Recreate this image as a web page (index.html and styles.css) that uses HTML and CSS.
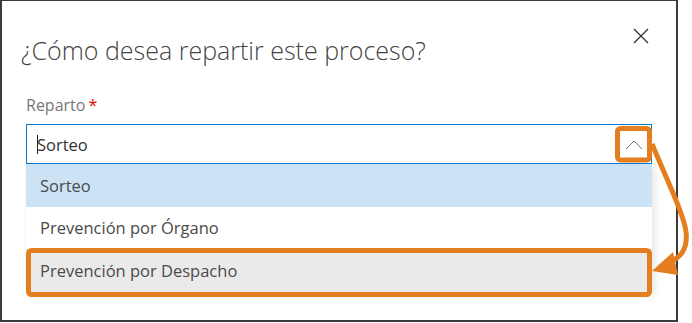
FILE: index.html
```html
<!DOCTYPE html>
<html lang="es">
<head>
<meta charset="utf-8">
<title>Reparto</title>
<link rel="stylesheet" href="styles.css">
</head>
<body>
<div class="dialog">
  <div class="header">
    <h1 class="title">¿Cómo desea repartir este proceso?</h1>
    <button class="close" aria-label="Cerrar">
      <svg width="16" height="16" viewBox="0 0 16 16"><path d="M1 1 L15 15 M15 1 L1 15" stroke="#333" stroke-width="1.3" fill="none"/></svg>
    </button>
  </div>
  <div class="field">
    <label class="label">Reparto<span class="req">*</span></label>
    <div class="combo">
      <span class="caret"></span><span class="value">Sorteo</span>
      <span class="chev"><svg width="18" height="10" viewBox="0 0 18 10"><path d="M1 9 L9 1 L17 9" stroke="#777" stroke-width="1" fill="none"/></svg></span>
    </div>
    <ul class="list">
      <li class="opt selected">Sorteo</li>
      <li class="opt">Prevención por Órgano</li>
      <li class="opt hovered">Prevención por Despacho</li>
    </ul>
  </div>
</div>
<svg class="annot" width="692" height="323" viewBox="0 0 692 323">
  <rect x="617.5" y="128.5" width="32" height="31.5" rx="3" fill="none" stroke="#e57e1e" stroke-width="5"/>
  <rect x="28.5" y="250.5" width="621" height="44" rx="3" fill="none" stroke="#e57e1e" stroke-width="5"/>
  <path d="M652 144 C 668 182, 684 215, 686 232 C 688 250, 680 258, 668 263" stroke="#e57e1e" stroke-width="5" fill="none"/>
  <polygon points="652,271 673,252 678,275" fill="#e57e1e"/>
</svg>
</body>
</html>
```
FILE: styles.css
```css
* { box-sizing: border-box; }
html, body { margin: 0; padding: 0; background: #fff; }
body { width: 692px; height: 323px; overflow: hidden; font-family: "Open Sans", "Segoe UI", sans-serif; color: #333; }

.dialog {
  width: 678px;
  height: 322px;
  border: 2px solid #3a3a3a;
  border-top-width: 1px;
  background: #fff;
  padding: 0 24px 0 24px;
}

.header {
  display: flex;
  justify-content: space-between;
  align-items: flex-start;
  height: 90px;
}

.title {
  margin: 32px 0 0 -5px;
  font-size: 25px;
  line-height: 34px;
  font-weight: 300;
  color: #444;
  letter-spacing: 0;
}

.close {
  margin: 27px 3px 0 0;
  width: 16px;
  height: 16px;
  padding: 0;
  border: 0;
  background: none;
  display: flex;
}

.field { display: flex; flex-direction: column; }

.label {
  font-size: 16px;
  color: #777;
  line-height: 20px;
  height: 33px;
  padding-top: 4px;
}
.req { color: #e00; margin-left: 3px; font-size: 16px; }

.combo {
  width: 626px;
  height: 40px;
  border: 1px solid #0078d4;
  display: flex;
  align-items: center;
  padding-left: 10px;
  padding-top: 1px;
  position: relative;
}
.caret { width: 1px; height: 19px; background: #222; margin-right: -1px; }
.value { font-size: 16.5px; color: #333; flex: 1; }
.chev { width: 34px; height: 38px; display: flex; align-items: center; justify-content: center; }

.list {
  list-style: none;
  margin: 0;
  padding: 0;
  width: 626px;
  box-shadow: 3px 3px 8px rgba(0,0,0,0.10);
}
.opt {
  height: 43px;
  line-height: 43px;
  padding-left: 14px;
  font-size: 16.5px;
  color: #4a4a4a;
}
.opt:nth-child(2) { height: 42px; line-height: 42px; }
.selected { background: #cce3f5; }
.hovered { background: #eaeaea; }

.annot { position: absolute; left: 0; top: 0; pointer-events: none; }
```
